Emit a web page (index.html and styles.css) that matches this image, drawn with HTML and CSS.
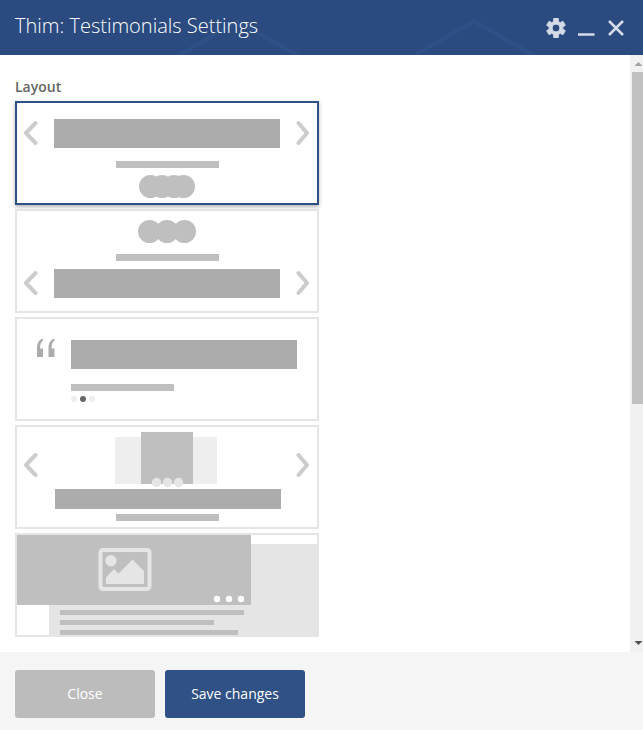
FILE: index.html
```html
<!DOCTYPE html>
<html lang="en">
<head>
<meta charset="utf-8">
<meta name="viewport" content="width=device-width, initial-scale=1">
<title>Thim: Testimonials Settings</title>
<link rel="stylesheet" href="styles.css">
</head>
<body>
<form class="panel">
  <header class="panel-header">
    <svg class="header-pattern" width="643" height="55" aria-hidden="true"><path d="M178 56 238 21 298 56M414 56 474 21 534 56"/></svg>
    <h1 class="title">Thim: Testimonials Settings</h1>
    <div class="controls">
      <button type="button" class="control" aria-label="Settings">
        <svg width="24" height="24" viewBox="0 0 24 24"><path class="gear" fill-rule="evenodd" d="M9.700 2.500h4.600v3l2 1.200 2.600-1.500 2.400 4.100-2.500 1.500v2.400l2.500 1.500-2.400 4.100-2.600-1.500-2 1.200v3H9.700v-3l-2-1.200-2.600 1.500-2.400-4.100 2.500-1.500v-2.400L2.700 9.300l2.400-4.100 2.600 1.500 2-1.200zM12 8a4 4 0 1 0 0 8 4 4 0 1 0 0-8z"/></svg>
      </button>
      <button type="button" class="control" aria-label="Minimize">
        <svg width="24" height="24" viewBox="0 0 24 24"><path class="line" d="M4 18.500h16.500"/></svg>
      </button>
      <button type="button" class="control" aria-label="Dismiss">
        <svg width="24" height="24" viewBox="0 0 24 24"><path class="line" d="M5 5l14 14M19 5l-14 14"/></svg>
      </button>
    </div>
  </header>

  <main class="panel-body">
    <fieldset class="layouts">
      <legend class="layouts-label">Layout</legend>
      <div class="options">
        <label class="option">
          <input class="option-input" type="radio" name="layout" value="1" aria-label="Slider with avatars below" checked>
          <svg class="preview" viewBox="0 0 300 100">
            <path class="arrow" d="M18.500 20 9 30l9.500 10M281.500 20l8.500 10-8.500 10"/>
            <path class="block" d="M37 16h226v29H37z"/>
            <path class="bar" d="M99 58h103v7H99z"/>
            <g class="bar"><circle cx="133.500" cy="83.500" r="11.500"/><circle cx="145" cy="83.500" r="11.500"/><circle cx="157" cy="83.500" r="11.500"/><circle cx="166.500" cy="83.500" r="11.500"/></g>
          </svg>
        </label>
        <label class="option">
          <input class="option-input" type="radio" name="layout" value="2" aria-label="Slider with avatars above">
          <svg class="preview" viewBox="0 0 300 100">
            <g class="bar"><circle cx="132.500" cy="20.500" r="11.500"/><circle cx="150" cy="20.500" r="11.500"/><circle cx="167.500" cy="20.500" r="11.500"/></g>
            <path class="bar" d="M99 43h103v7H99z"/>
            <path class="arrow" d="M18.500 62 9 72l9.500 10M281.500 62l8.500 10-8.500 10"/>
            <path class="block" d="M37 58h226v29H37z"/>
          </svg>
        </label>
        <label class="option">
          <input class="option-input" type="radio" name="layout" value="3" aria-label="Quote">
          <svg class="preview" viewBox="0 0 300 100">
            <path class="block" d="M20 38V29c0-5 2-8 5-9h1v1.500c-2 1.500-3 4-3 8h3V38zM31.500 38V29c0-5 2-8 5-9h1v1.500c-2 1.500-3 4-3 8h3V38z"/>
            <path class="block" d="M54 21h226v29H54z"/>
            <path class="bar" d="M54 65h103v7H54z"/>
            <circle class="faint" cx="57" cy="80" r="3"/><circle class="dark" cx="66" cy="80" r="3"/><circle class="faint" cx="75" cy="80" r="3"/>
          </svg>
        </label>
        <label class="option">
          <input class="option-input" type="radio" name="layout" value="4" aria-label="Photo carousel">
          <svg class="preview" viewBox="0 0 300 100">
            <path class="faint" d="M98 10h102v47H98z"/>
            <path class="bar" d="M124 5h52v52h-52z"/>
            <g class="pale"><circle cx="139.500" cy="55.500" r="4.700"/><circle cx="150.500" cy="55.500" r="4.700"/><circle cx="161.500" cy="55.500" r="4.700"/></g>
            <path class="arrow" d="M18.500 28 9 38l9.500 10M281.500 28l8.500 10-8.500 10"/>
            <path class="block" d="M38 62h226v20H38z"/>
            <path class="bar" d="M99 87h103v7H99z"/>
          </svg>
        </label>
        <label class="option">
          <input class="option-input" type="radio" name="layout" value="5" aria-label="Large image with text">
          <svg class="preview" viewBox="0 0 300 100">
            <path class="pale" d="M32 9h268v91H32z"/>
            <path class="bar" d="M0 0h234v70H0zM43 75h184v5H43zM43 85h154v5H43zM43 95h178v5H43z"/>
            <rect class="frame" x="83.500" y="15" width="49" height="39" rx="2.500"/>
            <circle class="pale" cx="94" cy="25.700" r="5.700"/>
            <path class="pale" d="M89 49v-6.500l8-8.500 4.500 4.500 14-14L127 36v13z"/>
            <g class="white"><circle cx="200" cy="64" r="3.200"/><circle cx="212" cy="64" r="3.200"/><circle cx="224" cy="64" r="3.200"/></g>
          </svg>
        </label>
      </div>
    </fieldset>
    <div class="scrollbar" aria-hidden="true">
      <svg class="scroll-arrow" width="13" height="17"><path fill="#a3a3a3" d="M4.500 11 8.500 7l4 4z"/></svg>
      <div class="track"><div class="thumb"></div></div>
      <svg class="scroll-arrow" width="13" height="17"><path fill="#505050" d="M4.500 6h8l-4 4z"/></svg>
    </div>
  </main>

  <footer class="panel-footer">
    <button type="button" class="button">Close</button>
    <button type="submit" class="button button-primary">Save changes</button>
  </footer>
</form>
</body>
</html>
```
FILE: styles.css
```css
* { box-sizing: border-box; }

body {
  margin: 0;
  background: #fff;
  color: #666;
  font: 14px/20px "Open Sans", "Noto Sans", sans-serif;
}

.panel {
  display: flex;
  flex-direction: column;
  min-height: 100vh;
}

.panel-header {
  position: relative;
  display: flex;
  align-items: center;
  justify-content: space-between;
  height: 55px;
  padding: 0 15px;
  overflow: hidden;
  background: #2b4b80;
  color: #fff;
}

.header-pattern {
  position: absolute;
  top: 0;
  left: 0;
  fill: none;
  stroke: #2f5087;
  stroke-width: 4;
}

.title {
  position: relative;
  margin: 0;
  padding-bottom: 4px;
  font-size: 20px;
  font-weight: 300;
  line-height: 28px;
}

.controls {
  position: relative;
  display: flex;
  gap: 6px;
}

.control {
  display: block;
  width: 24px;
  height: 24px;
  padding: 0;
  border: 0;
  background: none;
  color: #d5dbe6;
  cursor: pointer;
}

.control svg { display: block; }

.gear {
  fill: currentColor;
  stroke: currentColor;
  stroke-width: 1;
  stroke-linejoin: round;
}

.line {
  fill: none;
  stroke: currentColor;
  stroke-width: 2.5;
}

.panel-body {
  display: flex;
  flex: 1;
  justify-content: space-between;
}

.layouts {
  min-width: 0;
  margin: 0;
  padding: 22px 15px 15px;
  border: 0;
}

.layouts-label {
  float: left;
  padding: 0;
  font-weight: 600;
}

.options {
  display: flex;
  flex-direction: column;
  clear: both;
  gap: 4px;
  padding-top: 4px;
}

.option {
  position: relative;
  width: 304px;
  max-width: 100%;
  border: 2px solid #e5e5e5;
  cursor: pointer;
}

.option:has(:checked) {
  border-color: #305186;
  box-shadow: 0 2px 4px rgba(0, 0, 0, 0.3);
}

.option-input {
  position: absolute;
  inset: 0;
  width: 100%;
  height: 100%;
  margin: 0;
  opacity: 0;
  cursor: pointer;
}

.preview { display: block; width: 100%; }

.block { fill: #acacac; }
.bar { fill: #bfbfbf; }
.pale { fill: #e5e5e5; }
.faint { fill: #eee; }
.dark { fill: #666; }
.white { fill: #fff; }

.arrow {
  fill: none;
  stroke: #ccc;
  stroke-width: 4;
  stroke-linecap: round;
  stroke-linejoin: round;
}

.frame {
  fill: none;
  stroke: #e5e5e5;
  stroke-width: 4;
}

.scrollbar {
  display: flex;
  flex-direction: column;
  flex: none;
  width: 13px;
  background: #f1f1f1;
}

.scroll-arrow { display: block; flex: none; }

.track {
  flex: 1;
  padding-left: 2px;
}

.thumb {
  height: 59%;
  background: #c1c1c1;
}

.panel-footer {
  display: flex;
  gap: 10px;
  padding: 18px 15px 12px;
  background: #f5f5f5;
}

.button {
  width: 140px;
  height: 48px;
  padding: 0;
  border: 0;
  border-radius: 3px;
  background: #bcbcbc;
  color: #fff;
  font: inherit;
  cursor: pointer;
}

.button-primary { background: #305186; }
```
